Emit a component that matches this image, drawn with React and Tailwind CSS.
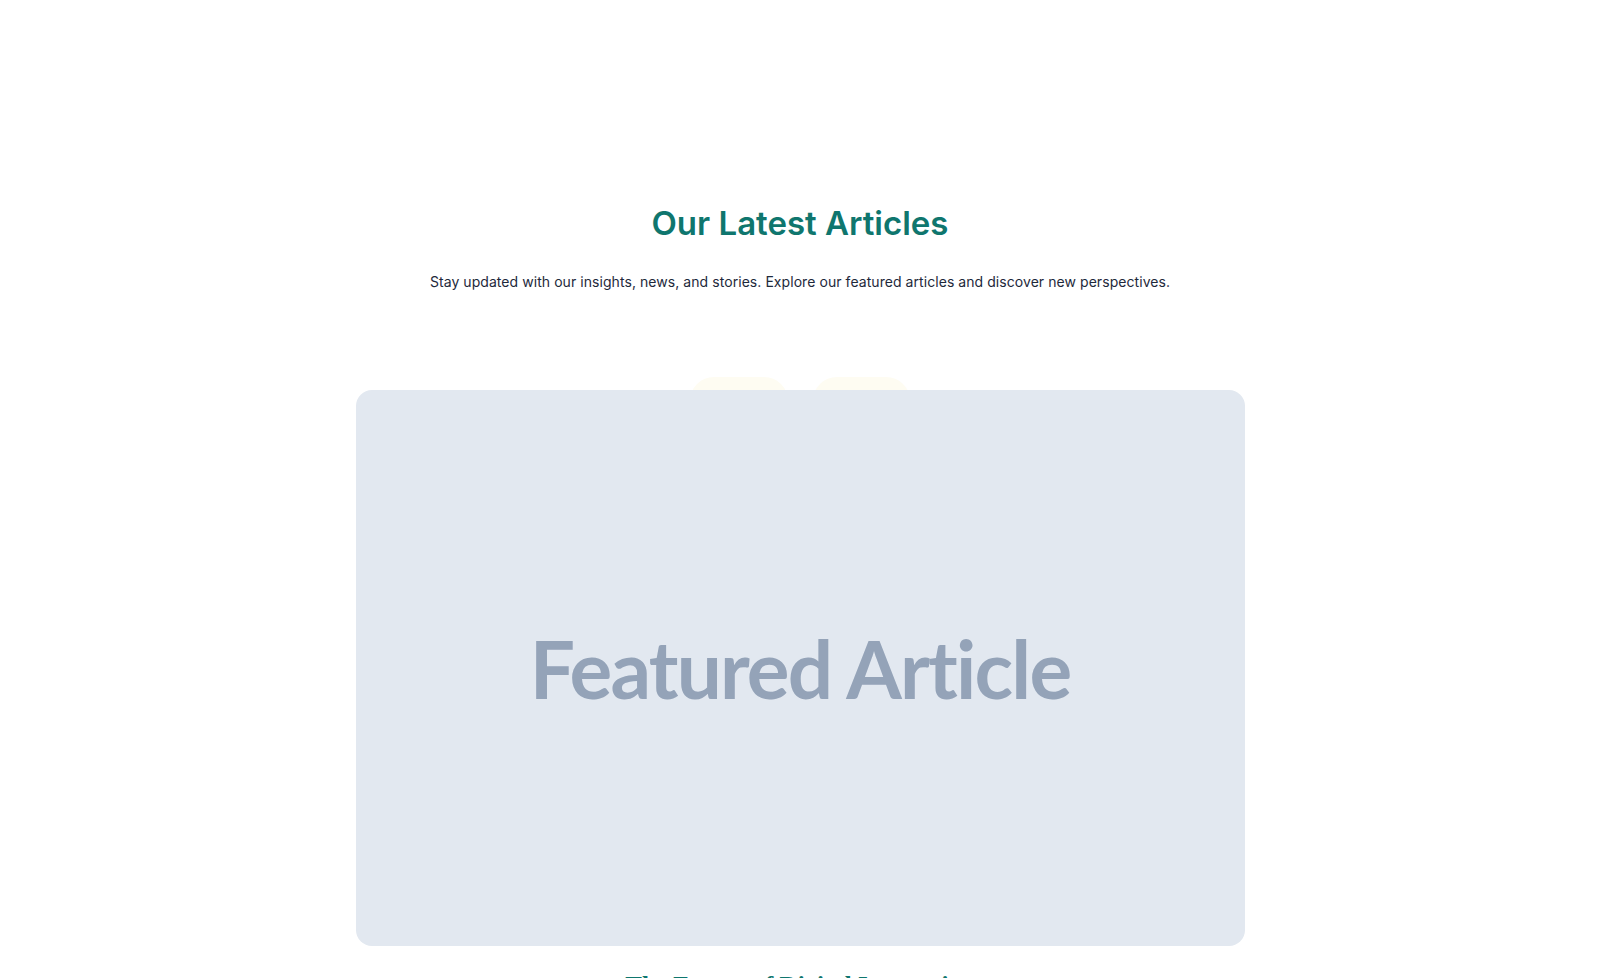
import React from 'react';

export default function App() {
  return (
    <div className="min-h-screen bg-white" style={{ fontFamily: 'Inter, "Noto Sans", sans-serif' }}>
      <section className="pt-[203px] flex flex-col items-center">
        <h2 className="text-[33px] leading-[40px] font-semibold text-[#0f766e]">
          Our Latest Articles
        </h2>
        <p className="mt-[29px] text-[14px] leading-5 tracking-[0.06px] text-[#1e293b]">
          Stay updated with our insights, news, and stories. Explore our featured articles and discover new perspectives.
        </p>

        {/* tabs sit behind the card */}
        <div className="mt-[85px] flex gap-[25px]">
          <div className="w-[98px] h-10 rounded-t-[24px] bg-[#fefcf2]" />
          <div className="w-[97px] h-10 rounded-t-[24px] bg-[#fefcf2]" />
        </div>

        <div className="relative -mt-[27px] w-[889px] h-[556px] rounded-2xl bg-[#e2e8f0] flex items-center justify-center">
          <span
            className="text-[80px] font-bold tracking-[-1.8px] text-[#94a3b8]"
            style={{ fontFamily: 'Lato, sans-serif' }}
          >
            Featured Article
          </span>
        </div>

        <h3
          className="mt-[21px] text-[25px] font-bold text-[#0f766e]"
          style={{ fontFamily: '"Liberation Serif", serif' }}
        >
          The Future of Digital Innovation
        </h3>
      </section>
    </div>
  );
}
